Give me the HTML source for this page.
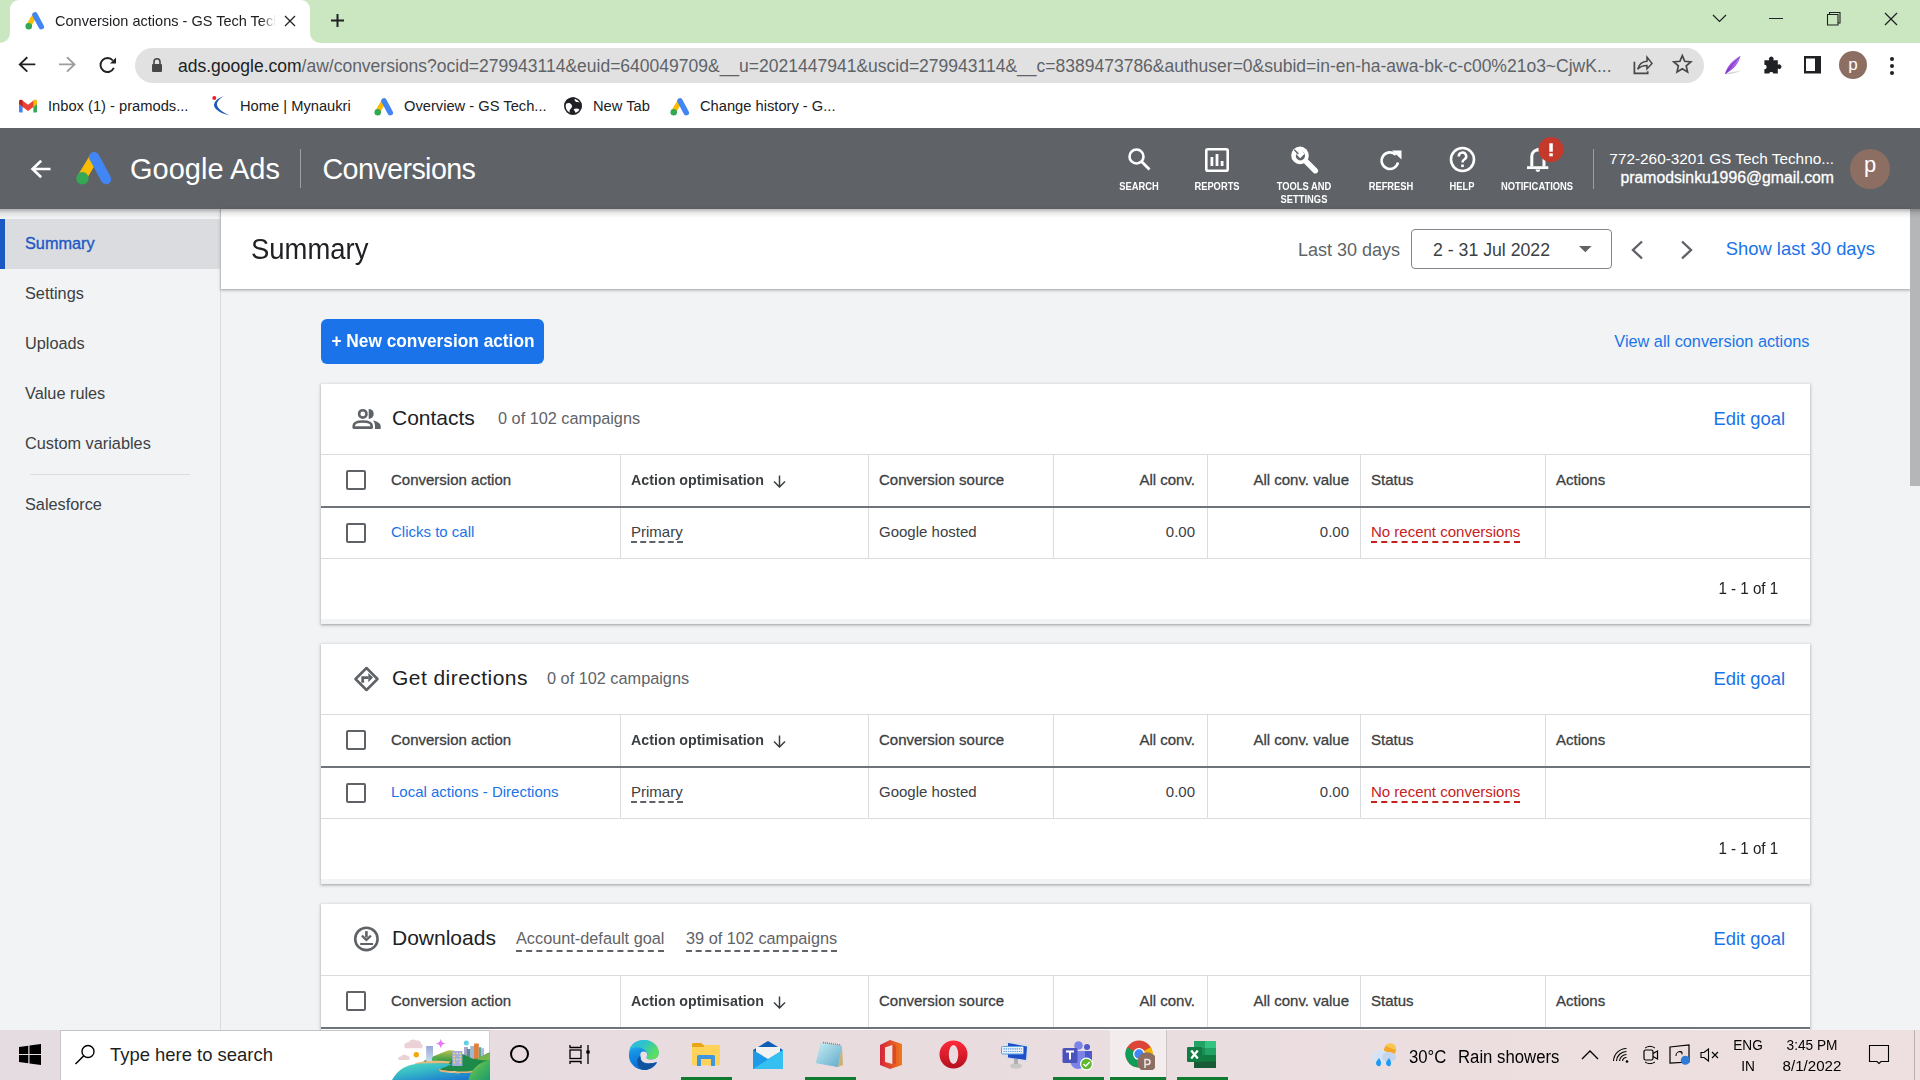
<!DOCTYPE html><html><head><meta charset="utf-8"><style>
html,body{margin:0;padding:0;width:1920px;height:1080px;overflow:hidden;background:#f1f3f4;font-family:"Liberation Sans",sans-serif;}
.r{position:absolute;}
.t{position:absolute;line-height:1;white-space:nowrap;}
</style></head><body>
<div class="r" style="left:0px;top:0px;width:1920px;height:88px;background:#fff;"></div>
<div class="r" style="left:10px;top:0px;width:300px;height:10px;background:#cbe7c1;"></div>
<div class="r" style="left:0px;top:0px;width:10px;height:43px;background:#cbe7c1;border-bottom-right-radius:10px;"></div>
<div class="r" style="left:310px;top:0px;width:1610px;height:43px;background:#cbe7c1;border-bottom-left-radius:10px;"></div>
<div class="r" style="left:10px;top:0;width:300px;height:43px;background:#fff;border-radius:9px 9px 0 0;"></div>
<svg class="r" style="left:20px;top:8px" width="28" height="28" viewBox="0 0 28 28"><g transform="scale(1.0)"><path d="M9 17L15 7" stroke="#fbbc04" stroke-width="5" stroke-linecap="round"/>
<path d="M15 7L21.3 18.7" stroke="#4285f4" stroke-width="5.5" stroke-linecap="round"/>
<circle cx="8.75" cy="18.25" r="3.3" fill="#34a853"/></g></svg>
<div class="r" style="left:55px;top:0;width:221px;height:40px;overflow:hidden;-webkit-mask-image:linear-gradient(90deg,#000 206px,transparent 221px);"><div class="t" style="left:0;top:13.10px;font-size:15px;color:#202124;transform:scaleX(0.968);transform-origin:left;">Conversion actions - GS Tech Technologies</div></div>
<svg class="r" style="left:284px;top:15px" width="12" height="12" viewBox="0 0 12 12"><path d="M1 1L11 11M11 1L1 11" stroke="#202124" stroke-width="1.3"/></svg>
<svg class="r" style="left:330px;top:13px" width="15" height="15" viewBox="0 0 15 15"><path d="M7.5 1V14M1 7.5H14" stroke="#202124" stroke-width="2"/></svg>
<svg class="r" style="left:1712px;top:14px" width="15" height="9" viewBox="0 0 15 9"><path d="M1 1L7.5 7.5L14 1" stroke="#202124" stroke-width="1.2" fill="none"/></svg>
<div class="r" style="left:1769px;top:18px;width:14px;height:1.2px;background:#202124;"></div>
<svg class="r" style="left:1826px;top:11px" width="16" height="16" viewBox="0 0 16 16"><path d="M1.5 3.5H12V14H1.5Z M3.5 3.5V1.5H14V12H12" stroke="#202124" stroke-width="1.1" fill="none"/></svg>
<svg class="r" style="left:1884px;top:12px" width="14" height="14" viewBox="0 0 14 14"><path d="M1 1L13 13M13 1L1 13" stroke="#202124" stroke-width="1.3"/></svg>
<svg class="r" style="left:18px;top:56px" width="20" height="18" viewBox="0 0 20 18"><path d="M17.3 8.4H1.8M9.3 1.2L1.8 8.4L9.3 15.6" stroke="#202124" stroke-width="1.9" fill="none"/></svg>
<svg class="r" style="left:58px;top:56px" width="20" height="18" viewBox="0 0 20 18"><path d="M1 8.4H16.5M9 1.2L16.5 8.4L9 15.6" stroke="#9e9e9e" stroke-width="1.9" fill="none"/></svg>
<svg class="r" style="left:98px;top:56px" width="20" height="18" viewBox="0 0 20 18"><path d="M14.86 4.5A7 7 0 1 0 15.84 11.96" stroke="#202124" stroke-width="1.9" fill="none"/><path d="M18 1.5V7.5H12Z" fill="#202124"/></svg>
<div class="r" style="left:135px;top:48px;width:1569px;height:35px;background:#e1e1e1;border-radius:18px;"></div>
<svg class="r" style="left:151px;top:57px" width="12" height="16" viewBox="0 0 12 16"><path d="M3 7V4.8A3 3 0 0 1 9 4.8V7" stroke="#474747" stroke-width="1.6" fill="none"/><rect x="1" y="7" width="10" height="8" rx="1" fill="#474747"/></svg>
<div class="t" style="top:57.99px;font-size:17.5px;color:#5f6368;font-weight:400;left:178px;"><span style="color:#202124">ads.google.com</span>/aw/conversions?ocid=279943114&amp;euid=640049709&amp;__u=2021447941&amp;uscid=279943114&amp;__c=8389473786&amp;authuser=0&amp;subid=in-en-ha-awa-bk-c-c00%21o3~CjwK...</div>
<svg class="r" style="left:1625px;top:48px" width="80" height="36" viewBox="0 0 80 36"><path d="M9.4 13.75V25.4H22.7V23.3" stroke="#474747" stroke-width="1.7" fill="none"/><path d="M12.6 21.2C14 16.5 17.5 13.5 22 13.3V9.2L27 15.4L22 20.9V17.6C18 17.6 15 18.8 12.6 21.2Z" stroke="#474747" stroke-width="1.5" fill="none" stroke-linejoin="miter"/><path d="M57.30 7.60 L59.71 13.28 L65.86 13.82 L61.20 17.87 L62.59 23.88 L57.30 20.70 L52.01 23.88 L53.40 17.87 L48.74 13.82 L54.89 13.28Z" stroke="#474747" stroke-width="1.7" fill="none" stroke-linejoin="miter"/></svg>
<svg class="r" style="left:1715px;top:48px" width="120" height="36" viewBox="0 0 120 36"><defs><linearGradient id="fth" x1="0" y1="1" x2="1" y2="0"><stop offset="0" stop-color="#8a3fd6"/><stop offset="0.5" stop-color="#a45be8"/><stop offset="1" stop-color="#b67cf0"/></linearGradient></defs><path d="M11 25.5C19 23.5 24 23 27 22.5C21 25 15 26.5 11 26.3Z" fill="#c8c8d0" opacity="0.8"/><path d="M10 26.3C11.5 19 17 12.5 25.3 8.1C24.5 15 18.5 21.5 10 26.3Z" fill="url(#fth)"/><path d="M10.5 25.8C15 19 19.5 14 25 8.5" stroke="#6a2aa8" stroke-width="0.8" fill="none"/><path d="M49.4 12.2H54.4A2.3 2.3 0 1 1 58.2 12.2H62.8V16.8A2.3 2.3 0 1 1 62.8 20.6V25.6H58.4A2.3 2.3 0 0 0 54.1 25.6H49.4V21.3A2.3 2.3 0 0 0 49.4 16.7Z" fill="#202124"/><path d="M89 8.1H106V25.6H89Z M91 10.6V23.1H100V10.6Z" fill="#202124" fill-rule="evenodd"/></svg>
<div class="r" style="left:1839px;top:51px;width:28px;height:28px;border-radius:50%;background:#8d6e63;"></div>
<div class="t" style="top:55.61px;font-size:17px;color:#fff;font-weight:400;left:1353px;width:1000px;text-align:center;">p</div>
<div class="r" style="left:1890px;top:57px;width:4px;height:4px;background:#202124;border-radius:50%;"></div>
<div class="r" style="left:1890px;top:64px;width:4px;height:4px;background:#202124;border-radius:50%;"></div>
<div class="r" style="left:1890px;top:71px;width:4px;height:4px;background:#202124;border-radius:50%;"></div>
<div class="r" style="left:0px;top:88px;width:1920px;height:40px;background:#fff;"></div>
<svg class="r" style="left:19px;top:99px" width="18" height="14" viewBox="0 0 18 14"><path d="M0 2.5A1.8 1.8 0 0 1 2.8 1L9 5.8L15.2 1A1.8 1.8 0 0 1 18 2.5V5.3L9 12L0 5.3Z" fill="#ea4335"/><path d="M0 2.5A1.8 1.8 0 0 1 2.8 1L3.6 1.6V7.9L0 5.3Z" fill="#c5221f"/><path d="M14.4 1.6L15.2 1A1.8 1.8 0 0 1 18 2.5V5.3L14.4 7.9Z" fill="#fbbc04"/><path d="M0 5.3L3.6 7.9V13.5H1A1 1 0 0 1 0 12.5Z" fill="#4285f4"/><path d="M18 5.3L14.4 7.9V13.5H17A1 1 0 0 0 18 12.5Z" fill="#34a853"/></svg>
<div class="t" style="top:98.76px;font-size:14.7px;color:#202124;font-weight:400;left:48px;">Inbox (1) - pramods...</div>
<svg class="r" style="left:210px;top:94px" width="22" height="24" viewBox="0 0 22 24"><path d="M14.5 2C7 4 2.5 9 4.5 13C6.5 17 13 20 19.5 21.5C13 18.5 7.5 14.5 7 11C6.5 7.5 10 4 14.5 2Z" fill="#1e5bb8"/><circle cx="4.3" cy="3.9" r="2" fill="#e8202a"/></svg>
<div class="t" style="top:98.76px;font-size:14.7px;color:#202124;font-weight:400;left:240px;">Home | Mynaukri</div>
<svg class="r" style="left:368.5px;top:94px" width="28" height="28" viewBox="0 0 28 28"><g transform="scale(1.0)"><path d="M9 17L15 7" stroke="#fbbc04" stroke-width="5" stroke-linecap="round"/>
<path d="M15 7L21.3 18.7" stroke="#4285f4" stroke-width="5.5" stroke-linecap="round"/>
<circle cx="8.75" cy="18.25" r="3.3" fill="#34a853"/></g></svg>
<div class="t" style="top:98.76px;font-size:14.7px;color:#202124;font-weight:400;left:404px;">Overview - GS Tech...</div>
<svg class="r" style="left:564px;top:97px" width="18" height="18" viewBox="0 0 18 18"><circle cx="9" cy="9" r="8.75" fill="#202124"/><path d="M2.5 6.5C4.5 5.5 6.5 6 7.5 7.5C8.5 9 8 11 6.5 12C5 13 5.5 15.5 6.5 17.3C3 16.2 0.6 12.8 0.6 9C0.6 8.1 0.8 7.3 1 6.6Z" fill="#fff"/><path d="M11 0.8C10 2.5 10.5 4.5 12.5 5C14.5 5.5 16.5 5 17.2 7.2C16.6 3.9 14.2 1.4 11 0.8Z" fill="#fff"/><path d="M9.5 12.5C11 11 14 11 15.5 12.5C16 13 16.5 13.5 16.4 13.8C15.3 15.5 13.6 16.8 11.6 17.3C12 16 11 14 9.5 12.5Z" fill="#fff"/><circle cx="9" cy="9" r="8.1" stroke="#202124" stroke-width="1.5" fill="none"/></svg>
<div class="t" style="top:98.76px;font-size:14.7px;color:#202124;font-weight:400;left:593px;">New Tab</div>
<svg class="r" style="left:664.5px;top:94px" width="28" height="28" viewBox="0 0 28 28"><g transform="scale(1.0)"><path d="M9 17L15 7" stroke="#fbbc04" stroke-width="5" stroke-linecap="round"/>
<path d="M15 7L21.3 18.7" stroke="#4285f4" stroke-width="5.5" stroke-linecap="round"/>
<circle cx="8.75" cy="18.25" r="3.3" fill="#34a853"/></g></svg>
<div class="t" style="top:98.76px;font-size:14.7px;color:#202124;font-weight:400;left:700px;">Change history - G...</div>
<div class="r" style="left:0px;top:128px;width:1920px;height:81px;background:#5f6368;"></div>
<svg class="r" style="left:30px;top:159px" width="21" height="20" viewBox="0 0 21 20"><path d="M20.5 10H3M11.2 1.7L2.5 10L11.2 18.3" stroke="#fff" stroke-width="2.6" fill="none"/></svg>
<svg class="r" style="left:66px;top:144px" width="50" height="50" viewBox="0 0 50 50"><g transform="scale(1.88)"><path d="M9 17L15 7" stroke="#fbbc04" stroke-width="5" stroke-linecap="round"/>
<path d="M15 7L21.3 18.7" stroke="#4285f4" stroke-width="5.5" stroke-linecap="round"/>
<circle cx="8.75" cy="18.25" r="3.3" fill="#34a853"/></g></svg>
<div class="t" style="top:154.95px;font-size:29px;color:#fff;font-weight:400;left:130px;">Google Ads</div>
<div class="r" style="left:300px;top:149px;width:1px;height:39px;background:#9aa0a6;"></div>
<div class="t" style="top:155.21px;font-size:28.7px;color:#fff;font-weight:400;left:322.5px;letter-spacing:-0.6px;">Conversions</div>
<div class="t" style="top:180.99px;font-size:11px;color:#fff;font-weight:700;left:639px;width:1000px;text-align:center;transform:scaleX(0.85);transform-origin:center;">SEARCH</div>
<div class="t" style="top:180.99px;font-size:11px;color:#fff;font-weight:700;left:717px;width:1000px;text-align:center;transform:scaleX(0.85);transform-origin:center;">REPORTS</div>
<div class="t" style="top:180.99px;font-size:11px;color:#fff;font-weight:700;left:804px;width:1000px;text-align:center;transform:scaleX(0.85);transform-origin:center;">TOOLS AND</div>
<div class="t" style="top:193.99px;font-size:11px;color:#fff;font-weight:700;left:804px;width:1000px;text-align:center;transform:scaleX(0.85);transform-origin:center;">SETTINGS</div>
<div class="t" style="top:180.99px;font-size:11px;color:#fff;font-weight:700;left:891px;width:1000px;text-align:center;transform:scaleX(0.85);transform-origin:center;">REFRESH</div>
<div class="t" style="top:180.99px;font-size:11px;color:#fff;font-weight:700;left:962px;width:1000px;text-align:center;transform:scaleX(0.85);transform-origin:center;">HELP</div>
<div class="t" style="top:180.99px;font-size:11px;color:#fff;font-weight:700;left:1037px;width:1000px;text-align:center;transform:scaleX(0.85);transform-origin:center;">NOTIFICATIONS</div>
<svg class="r" style="left:1127px;top:147px" width="25" height="25" viewBox="0 0 25 25"><circle cx="9.5" cy="9.5" r="7" stroke="#fff" stroke-width="2.6" fill="none"/><path d="M14.5 14.5L22.5 22.5" stroke="#fff" stroke-width="2.8"/></svg>
<svg class="r" style="left:1205px;top:148px" width="25" height="24" viewBox="0 0 25 24"><rect x="1.3" y="1.3" width="21.4" height="21.4" rx="1.5" stroke="#fff" stroke-width="2.6" fill="none"/><rect x="5.5" y="9" width="2.8" height="9" fill="#fff"/><rect x="10.6" y="6" width="2.8" height="12" fill="#fff"/><rect x="15.7" y="13" width="2.8" height="5" fill="#fff"/></svg>
<svg class="r" style="left:1285px;top:140px" width="36" height="36" viewBox="0 0 36 36"><path d="M15 15.4L30.3 30.7" stroke="#fff" stroke-width="5.5" stroke-linecap="round"/><circle cx="15" cy="15.4" r="8.8" fill="#fff"/><circle cx="15.4" cy="15.8" r="4.6" fill="#5f6368"/><path d="M15.4 9.6L19.6 13.8L15.2 18.2L11 14Z" fill="#fff"/><path d="M9.3 9.8L13.4 13.9" stroke="#5f6368" stroke-width="1.4"/><path d="M11.6 15.2A4 4 0 0 0 19.2 15" stroke="#fff" stroke-width="1.2" fill="none" opacity="0"/></svg>
<svg class="r" style="left:1379px;top:149px" width="25" height="23" viewBox="0 0 25 23"><path d="M19 13.5A8.3 8.3 0 1 1 16.8 5.8" stroke="#fff" stroke-width="2.6" fill="none"/><path d="M13 1.5H22.5V10.5Z" fill="#fff"/></svg>
<svg class="r" style="left:1449px;top:146px" width="28" height="28" viewBox="0 0 28 28"><circle cx="13.5" cy="13.5" r="11.5" stroke="#fff" stroke-width="2.6" fill="none"/><path d="M9.8 10.5A3.7 3.7 0 1 1 15.5 13.3C14 14.2 13.5 15 13.5 16.5" stroke="#fff" stroke-width="2.5" fill="none"/><rect x="12.2" y="18.5" width="2.6" height="2.6" fill="#fff"/></svg>
<svg class="r" style="left:1515px;top:135px" width="50" height="40" viewBox="0 0 50 40"><rect x="12" y="31.25" width="21.3" height="2.8" fill="#fff"/><path d="M16.8 31.5V21A6.1 6.1 0 0 1 29 21V31.5" stroke="#fff" stroke-width="3" fill="none"/><circle cx="22.9" cy="14.3" r="1.6" fill="#fff"/><path d="M20.5 34.5A2.4 2.4 0 0 0 25.3 34.5Z" fill="#fff"/><circle cx="36" cy="14.6" r="12.5" fill="#c5392b"/><rect x="34.3" y="8.3" width="3.5" height="8.4" fill="#fff"/><rect x="34.3" y="18.3" width="3.5" height="3" fill="#fff"/></svg>
<div class="r" style="left:1593px;top:149px;width:1px;height:40px;background:#9aa0a6;"></div>
<div class="t" style="top:151.01px;font-size:15.35px;color:#fff;font-weight:400;right:86px;text-align:right;">772-260-3201 GS Tech Techno...</div>
<div class="t" style="top:170.33px;font-size:15.8px;color:#fff;font-weight:400;right:86px;text-align:right;-webkit-text-stroke:0.3px #fff;">pramodsinku1996@gmail.com</div>
<div class="r" style="left:1850px;top:149px;width:40px;height:40px;border-radius:50%;background:#8d6e63;"></div>
<div class="t" style="top:154.38px;font-size:22px;color:#fff;font-weight:400;left:1370px;width:1000px;text-align:center;">p</div>
<div class="r" style="left:0px;top:209px;width:220px;height:821px;background:#f1f3f4;border-right:1px solid #dadce0;"></div>
<div class="r" style="left:0px;top:219px;width:220px;height:50px;background:#dadce0;"></div>
<div class="r" style="left:0px;top:219px;width:5px;height:50px;background:#1a58c2;"></div>
<div class="t" style="top:235.40px;font-size:16.3px;color:#1c58c4;font-weight:400;left:25px;-webkit-text-stroke:0.35px #1c58c4;">Summary</div>
<div class="t" style="top:285.00px;font-size:16.3px;color:#3c4043;font-weight:400;left:25px;">Settings</div>
<div class="t" style="top:335.00px;font-size:16.3px;color:#3c4043;font-weight:400;left:25px;">Uploads</div>
<div class="t" style="top:385.00px;font-size:16.3px;color:#3c4043;font-weight:400;left:25px;">Value rules</div>
<div class="t" style="top:435.00px;font-size:16.3px;color:#3c4043;font-weight:400;left:25px;">Custom variables</div>
<div class="r" style="left:30px;top:474px;width:160px;height:1px;background:#dadce0;"></div>
<div class="t" style="top:495.70px;font-size:16.3px;color:#3c4043;font-weight:400;left:25px;">Salesforce</div>
<div class="r" style="left:221px;top:209px;width:1689px;height:80px;background:#fff;box-shadow:0 1px 2px rgba(60,64,67,.3),0 1px 3px 1px rgba(60,64,67,.15);"></div>
<div class="t" style="top:233.83px;font-size:29.5px;color:#202124;font-weight:400;left:250.8px;transform:scaleX(0.93);transform-origin:left;">Summary</div>
<div class="t" style="top:241.46px;font-size:18px;color:#5f6368;font-weight:400;right:520px;text-align:right;">Last 30 days</div>
<div class="r" style="left:1411px;top:229px;width:199px;height:38px;border:1px solid #80868b;border-radius:4px;background:#fff;"></div>
<div class="t" style="top:241.72px;font-size:17.7px;color:#3c4043;font-weight:400;left:1433px;">2 - 31 Jul 2022</div>
<svg class="r" style="left:1579px;top:246px" width="13" height="7" viewBox="0 0 13 7"><path d="M0 0H12.6L6.3 6.3Z" fill="#5f6368"/></svg>
<svg class="r" style="left:1630px;top:240px" width="14" height="20" viewBox="0 0 14 20"><path d="M12 1.5L3 10L12 18.5" stroke="#5f6368" stroke-width="2.4" fill="none"/></svg>
<svg class="r" style="left:1680px;top:240px" width="14" height="20" viewBox="0 0 14 20"><path d="M2 1.5L11 10L2 18.5" stroke="#5f6368" stroke-width="2.4" fill="none"/></svg>
<div class="t" style="top:240.12px;font-size:18.4px;color:#1a73e8;font-weight:400;right:45px;text-align:right;">Show last 30 days</div>
<div class="r" style="left:1910px;top:209px;width:10px;height:821px;background:#f1f3f4;"></div>
<div class="r" style="left:1910px;top:209px;width:10px;height:277px;background:#b5b6b8;"></div>
<div class="r" style="left:0px;top:209px;width:1920px;height:9px;background:linear-gradient(rgba(0,0,0,.28),rgba(0,0,0,.08) 45%,rgba(0,0,0,0));"></div>
<div class="r" style="left:321px;top:319px;width:223px;height:45px;background:#1a73e8;border-radius:6px;"></div>
<div class="t" style="top:332.11px;font-size:18.3px;color:#fff;font-weight:700;left:-67px;width:1000px;text-align:center;transform:scaleX(0.945);transform-origin:center;">+ New conversion action</div>
<div class="t" style="top:332.90px;font-size:16.3px;color:#1a73e8;font-weight:400;right:110.5px;text-align:right;">View all conversion actions</div>
<div class="r" style="left:321px;top:384px;width:1489px;height:240px;background:#fff;box-shadow:0 1px 2px rgba(60,64,67,.3),0 1px 3px 1px rgba(60,64,67,.15);"></div>
<svg class="r" style="left:345px;top:400px" width="40" height="32" viewBox="0 0 40 32"><circle cx="17.8" cy="13.9" r="3.7" stroke="#5f6368" stroke-width="2.6" fill="none"/><path d="M23.7 8.9A5 5 0 0 1 23.7 18.9Z" fill="#5f6368"/><path d="M8.7 27.6V26C8.7 22.5 13.5 21.5 17.7 21.5C21.9 21.5 26.7 22.5 26.7 26V27.6Z" stroke="#5f6368" stroke-width="2.6" fill="none" stroke-linejoin="round"/><path d="M28.1 20.4C31.5 21.2 35.7 23 35.7 26V28.9H30V26C30 23.8 29.3 21.8 28.1 20.4Z" fill="#5f6368"/></svg>
<div class="t" style="top:406.72px;font-size:21px;color:#202124;font-weight:400;left:392px;">Contacts</div>
<div class="t" style="top:410.20px;font-size:16.3px;color:#5f6368;font-weight:400;left:498px;">0 of 102 campaigns</div>
<div class="t" style="top:410.12px;font-size:18.4px;color:#1a73e8;font-weight:400;right:135px;text-align:right;">Edit goal</div>
<div class="r" style="left:321px;top:454px;width:1489px;height:1px;background:#dadce0;"></div>
<div class="r" style="left:321px;top:506px;width:1489px;height:2px;background:#6f747a;"></div>
<div class="r" style="left:620px;top:455px;width:1px;height:51px;background:#dadce0;"></div>
<div class="r" style="left:868px;top:455px;width:1px;height:51px;background:#dadce0;"></div>
<div class="r" style="left:1053px;top:455px;width:1px;height:51px;background:#dadce0;"></div>
<div class="r" style="left:1207px;top:455px;width:1px;height:51px;background:#dadce0;"></div>
<div class="r" style="left:1360px;top:455px;width:1px;height:51px;background:#dadce0;"></div>
<div class="r" style="left:1545px;top:455px;width:1px;height:51px;background:#dadce0;"></div>
<div class="r" style="left:346px;top:470px;width:16px;height:16px;border:2px solid #5f6368;border-radius:2px;"></div>
<div class="t" style="top:472.30px;font-size:15px;color:#3c4043;font-weight:400;left:391px;-webkit-text-stroke:0.3px #3c4043;">Conversion action</div>
<div class="t" style="top:472.30px;font-size:15px;color:#3c4043;font-weight:700;left:631px;transform:scaleX(0.95);transform-origin:left;">Action optimisation</div>
<svg class="r" style="left:773px;top:475px" width="13" height="13" viewBox="0 0 13 13"><path d="M6.5 0.5V12M1 6.5L6.5 12L12 6.5" stroke="#3c4043" stroke-width="1.5" fill="none"/></svg>
<div class="t" style="top:472.30px;font-size:15px;color:#3c4043;font-weight:400;left:879px;-webkit-text-stroke:0.3px #3c4043;">Conversion source</div>
<div class="t" style="top:472.30px;font-size:15px;color:#3c4043;font-weight:400;right:725px;text-align:right;-webkit-text-stroke:0.3px #3c4043;">All conv.</div>
<div class="t" style="top:472.30px;font-size:15px;color:#3c4043;font-weight:400;right:571px;text-align:right;-webkit-text-stroke:0.3px #3c4043;">All conv. value</div>
<div class="t" style="top:472.30px;font-size:15px;color:#3c4043;font-weight:400;left:1371px;-webkit-text-stroke:0.3px #3c4043;">Status</div>
<div class="t" style="top:472.30px;font-size:15px;color:#3c4043;font-weight:400;left:1556px;-webkit-text-stroke:0.3px #3c4043;">Actions</div>
<div class="r" style="left:620px;top:508px;width:1px;height:50px;background:#dadce0;"></div>
<div class="r" style="left:868px;top:508px;width:1px;height:50px;background:#dadce0;"></div>
<div class="r" style="left:1053px;top:508px;width:1px;height:50px;background:#dadce0;"></div>
<div class="r" style="left:1207px;top:508px;width:1px;height:50px;background:#dadce0;"></div>
<div class="r" style="left:1360px;top:508px;width:1px;height:50px;background:#dadce0;"></div>
<div class="r" style="left:1545px;top:508px;width:1px;height:50px;background:#dadce0;"></div>
<div class="r" style="left:321px;top:558px;width:1489px;height:1px;background:#dadce0;"></div>
<div class="r" style="left:346px;top:523px;width:16px;height:16px;border:2px solid #5f6368;border-radius:2px;"></div>
<div class="t" style="top:524.30px;font-size:15px;color:#1a73e8;font-weight:400;left:391px;">Clicks to call</div>
<div class="t" style="top:524.30px;font-size:15px;color:#3c4043;font-weight:400;left:631px;border-bottom:2px dashed #5f6368;height:16.5px;">Primary</div>
<div class="t" style="top:524.30px;font-size:15px;color:#3c4043;font-weight:400;left:879px;">Google hosted</div>
<div class="t" style="top:524.30px;font-size:15px;color:#3c4043;font-weight:400;right:725px;text-align:right;">0.00</div>
<div class="t" style="top:524.30px;font-size:15px;color:#3c4043;font-weight:400;right:571px;text-align:right;">0.00</div>
<div class="t" style="top:524.30px;font-size:15px;color:#c5221f;font-weight:400;left:1371px;border-bottom:2px dashed #c5221f;height:16.5px;">No recent conversions</div>
<div class="t" style="top:581.06px;font-size:16px;color:#202124;font-weight:400;right:142px;text-align:right;transform:scaleX(0.945);transform-origin:right;">1 - 1 of 1</div>
<div class="r" style="left:321px;top:619px;width:1489px;height:5px;background:#f1f3f4;"></div>
<div class="r" style="left:321px;top:644px;width:1489px;height:240px;background:#fff;box-shadow:0 1px 2px rgba(60,64,67,.3),0 1px 3px 1px rgba(60,64,67,.15);"></div>
<svg class="r" style="left:345px;top:660px" width="40" height="32" viewBox="0 0 40 32"><path d="M21.5 8L32.5 19L21.5 30L10.5 19Z" stroke="#5f6368" stroke-width="2.5" fill="none" stroke-linejoin="round"/><path d="M16.3 16.3H23.5V19.1H19.1V22.8H16.3Z" fill="#5f6368"/><path d="M23.3 13L28 17.6L23.3 22.2Z" fill="#5f6368"/></svg>
<div class="t" style="top:666.72px;font-size:21px;color:#202124;font-weight:400;left:392px;letter-spacing:0.45px;">Get directions</div>
<div class="t" style="top:670.20px;font-size:16.3px;color:#5f6368;font-weight:400;left:547px;">0 of 102 campaigns</div>
<div class="t" style="top:670.12px;font-size:18.4px;color:#1a73e8;font-weight:400;right:135px;text-align:right;">Edit goal</div>
<div class="r" style="left:321px;top:714px;width:1489px;height:1px;background:#dadce0;"></div>
<div class="r" style="left:321px;top:766px;width:1489px;height:2px;background:#6f747a;"></div>
<div class="r" style="left:620px;top:715px;width:1px;height:51px;background:#dadce0;"></div>
<div class="r" style="left:868px;top:715px;width:1px;height:51px;background:#dadce0;"></div>
<div class="r" style="left:1053px;top:715px;width:1px;height:51px;background:#dadce0;"></div>
<div class="r" style="left:1207px;top:715px;width:1px;height:51px;background:#dadce0;"></div>
<div class="r" style="left:1360px;top:715px;width:1px;height:51px;background:#dadce0;"></div>
<div class="r" style="left:1545px;top:715px;width:1px;height:51px;background:#dadce0;"></div>
<div class="r" style="left:346px;top:730px;width:16px;height:16px;border:2px solid #5f6368;border-radius:2px;"></div>
<div class="t" style="top:732.30px;font-size:15px;color:#3c4043;font-weight:400;left:391px;-webkit-text-stroke:0.3px #3c4043;">Conversion action</div>
<div class="t" style="top:732.30px;font-size:15px;color:#3c4043;font-weight:700;left:631px;transform:scaleX(0.95);transform-origin:left;">Action optimisation</div>
<svg class="r" style="left:773px;top:735px" width="13" height="13" viewBox="0 0 13 13"><path d="M6.5 0.5V12M1 6.5L6.5 12L12 6.5" stroke="#3c4043" stroke-width="1.5" fill="none"/></svg>
<div class="t" style="top:732.30px;font-size:15px;color:#3c4043;font-weight:400;left:879px;-webkit-text-stroke:0.3px #3c4043;">Conversion source</div>
<div class="t" style="top:732.30px;font-size:15px;color:#3c4043;font-weight:400;right:725px;text-align:right;-webkit-text-stroke:0.3px #3c4043;">All conv.</div>
<div class="t" style="top:732.30px;font-size:15px;color:#3c4043;font-weight:400;right:571px;text-align:right;-webkit-text-stroke:0.3px #3c4043;">All conv. value</div>
<div class="t" style="top:732.30px;font-size:15px;color:#3c4043;font-weight:400;left:1371px;-webkit-text-stroke:0.3px #3c4043;">Status</div>
<div class="t" style="top:732.30px;font-size:15px;color:#3c4043;font-weight:400;left:1556px;-webkit-text-stroke:0.3px #3c4043;">Actions</div>
<div class="r" style="left:620px;top:768px;width:1px;height:50px;background:#dadce0;"></div>
<div class="r" style="left:868px;top:768px;width:1px;height:50px;background:#dadce0;"></div>
<div class="r" style="left:1053px;top:768px;width:1px;height:50px;background:#dadce0;"></div>
<div class="r" style="left:1207px;top:768px;width:1px;height:50px;background:#dadce0;"></div>
<div class="r" style="left:1360px;top:768px;width:1px;height:50px;background:#dadce0;"></div>
<div class="r" style="left:1545px;top:768px;width:1px;height:50px;background:#dadce0;"></div>
<div class="r" style="left:321px;top:818px;width:1489px;height:1px;background:#dadce0;"></div>
<div class="r" style="left:346px;top:783px;width:16px;height:16px;border:2px solid #5f6368;border-radius:2px;"></div>
<div class="t" style="top:784.30px;font-size:15px;color:#1a73e8;font-weight:400;left:391px;">Local actions - Directions</div>
<div class="t" style="top:784.30px;font-size:15px;color:#3c4043;font-weight:400;left:631px;border-bottom:2px dashed #5f6368;height:16.5px;">Primary</div>
<div class="t" style="top:784.30px;font-size:15px;color:#3c4043;font-weight:400;left:879px;">Google hosted</div>
<div class="t" style="top:784.30px;font-size:15px;color:#3c4043;font-weight:400;right:725px;text-align:right;">0.00</div>
<div class="t" style="top:784.30px;font-size:15px;color:#3c4043;font-weight:400;right:571px;text-align:right;">0.00</div>
<div class="t" style="top:784.30px;font-size:15px;color:#c5221f;font-weight:400;left:1371px;border-bottom:2px dashed #c5221f;height:16.5px;">No recent conversions</div>
<div class="t" style="top:841.06px;font-size:16px;color:#202124;font-weight:400;right:142px;text-align:right;transform:scaleX(0.945);transform-origin:right;">1 - 1 of 1</div>
<div class="r" style="left:321px;top:879px;width:1489px;height:5px;background:#f1f3f4;"></div>
<div class="r" style="left:321px;top:904px;width:1489px;height:196px;background:#fff;box-shadow:0 1px 2px rgba(60,64,67,.3),0 1px 3px 1px rgba(60,64,67,.15);"></div>
<svg class="r" style="left:345px;top:920px" width="40" height="32" viewBox="0 0 40 32"><circle cx="21.4" cy="18.9" r="11.2" stroke="#5f6368" stroke-width="2.6" fill="none"/><path d="M21.4 11.1V17.5" stroke="#5f6368" stroke-width="2.6"/><path d="M16.1 16.4L17.7 14.8L21.4 18.5L25.1 14.8L26.7 16.4L21.4 21.6Z" fill="#5f6368"/><path d="M15.2 24H28" stroke="#5f6368" stroke-width="2"/></svg>
<div class="t" style="top:926.72px;font-size:21px;color:#202124;font-weight:400;left:392px;">Downloads</div>
<div class="t" style="top:930.20px;font-size:16.3px;color:#5f6368;font-weight:400;left:516px;border-bottom:2px dashed #5f6368;height:20px;">Account-default goal</div>
<div class="t" style="top:930.20px;font-size:16.3px;color:#5f6368;font-weight:400;left:686px;border-bottom:2px dashed #5f6368;height:20px;">39 of 102 campaigns</div>
<div class="t" style="top:930.12px;font-size:18.4px;color:#1a73e8;font-weight:400;right:135px;text-align:right;">Edit goal</div>
<div class="r" style="left:321px;top:975px;width:1489px;height:1px;background:#dadce0;"></div>
<div class="r" style="left:321px;top:1027px;width:1489px;height:2px;background:#6f747a;"></div>
<div class="r" style="left:620px;top:976px;width:1px;height:51px;background:#dadce0;"></div>
<div class="r" style="left:868px;top:976px;width:1px;height:51px;background:#dadce0;"></div>
<div class="r" style="left:1053px;top:976px;width:1px;height:51px;background:#dadce0;"></div>
<div class="r" style="left:1207px;top:976px;width:1px;height:51px;background:#dadce0;"></div>
<div class="r" style="left:1360px;top:976px;width:1px;height:51px;background:#dadce0;"></div>
<div class="r" style="left:1545px;top:976px;width:1px;height:51px;background:#dadce0;"></div>
<div class="r" style="left:346px;top:991px;width:16px;height:16px;border:2px solid #5f6368;border-radius:2px;"></div>
<div class="t" style="top:993.30px;font-size:15px;color:#3c4043;font-weight:400;left:391px;-webkit-text-stroke:0.3px #3c4043;">Conversion action</div>
<div class="t" style="top:993.30px;font-size:15px;color:#3c4043;font-weight:700;left:631px;transform:scaleX(0.95);transform-origin:left;">Action optimisation</div>
<svg class="r" style="left:773px;top:996px" width="13" height="13" viewBox="0 0 13 13"><path d="M6.5 0.5V12M1 6.5L6.5 12L12 6.5" stroke="#3c4043" stroke-width="1.5" fill="none"/></svg>
<div class="t" style="top:993.30px;font-size:15px;color:#3c4043;font-weight:400;left:879px;-webkit-text-stroke:0.3px #3c4043;">Conversion source</div>
<div class="t" style="top:993.30px;font-size:15px;color:#3c4043;font-weight:400;right:725px;text-align:right;-webkit-text-stroke:0.3px #3c4043;">All conv.</div>
<div class="t" style="top:993.30px;font-size:15px;color:#3c4043;font-weight:400;right:571px;text-align:right;-webkit-text-stroke:0.3px #3c4043;">All conv. value</div>
<div class="t" style="top:993.30px;font-size:15px;color:#3c4043;font-weight:400;left:1371px;-webkit-text-stroke:0.3px #3c4043;">Status</div>
<div class="t" style="top:993.30px;font-size:15px;color:#3c4043;font-weight:400;left:1556px;-webkit-text-stroke:0.3px #3c4043;">Actions</div>
<div class="r" style="left:0px;top:1030px;width:1920px;height:50px;background:linear-gradient(90deg,#e5dce2 0%,#e9dcdf 45%,#eee0e0 100%);"></div>
<svg class="r" style="left:19px;top:1044px" width="22" height="21" viewBox="0 0 22 21"><path d="M0 3L9.3 1.7V10H0Z M10.5 1.5L22 0V10H10.5Z M0 11H9.3V19.3L0 18Z M10.5 11H22V21L10.5 19.5Z" fill="#000"/></svg>
<div class="r" style="left:60px;top:1030px;width:430px;height:50px;background:#fff;border-left:1px solid #c4c4c4;border-top:1px solid #c4c4c4;border-right:1px solid #d0d0d0;box-sizing:border-box;"></div>
<svg class="r" style="left:74px;top:1044px" width="22" height="22" viewBox="0 0 22 22"><circle cx="14" cy="7.5" r="6" stroke="#000" stroke-width="1.4" fill="none"/><path d="M9.8 11.7L1.5 20" stroke="#000" stroke-width="1.5"/></svg>
<div class="t" style="top:1046.38px;font-size:18.45px;color:#1f1f1f;font-weight:400;left:110px;">Type here to search</div>
<svg class="r" style="left:390px;top:1031px" width="100" height="49" viewBox="0 0 100 49"><defs>
<linearGradient id="wat" x1="0" y1="0" x2="0.8" y2="1"><stop offset="0" stop-color="#52e0bf"/><stop offset="0.5" stop-color="#34b4c8"/><stop offset="1" stop-color="#1a78d0"/></linearGradient>
<linearGradient id="hil" x1="0" y1="0" x2="0" y2="1"><stop offset="0" stop-color="#b4c24a"/><stop offset="0.5" stop-color="#3a9a48"/><stop offset="1" stop-color="#1b7f45"/></linearGradient>
<linearGradient id="hil2" x1="0" y1="0" x2="1" y2="1"><stop offset="0" stop-color="#b8cf4a"/><stop offset="0.5" stop-color="#45b45a"/><stop offset="1" stop-color="#1c9a6a"/></linearGradient>
<linearGradient id="bld" x1="0" y1="0" x2="0" y2="1"><stop offset="0" stop-color="#9aa6d8"/><stop offset="1" stop-color="#c4dcf0"/></linearGradient>
</defs>
<path d="M14.5 16.5C13.5 13 16 11 18.5 11.5C19.5 8.5 24 7.5 26.5 9.5C29 9 31.5 11 31 13C33.5 13.5 33.5 16.8 31 17.2H16Z" fill="#ebd2d6"/>
<path d="M8.5 29C7.5 27 9 25.5 11 25.5C12 23.2 16 23 17.5 25C19.5 25 20.5 27.5 19 29Z" fill="#ebd2d6"/>
<circle cx="26.3" cy="23.7" r="2.7" fill="#f5a70a"/>
<path d="M50.8 7.8C51.5 11 52.5 12 56 12.5C52.5 13.2 51.5 14.2 50.8 17.5C50 14.2 49 13.2 45.5 12.5C49 12 50 11 50.8 7.8Z" fill="#e57df2"/>
<circle cx="76.3" cy="12" r="2.5" fill="#62cfe6"/>
<rect x="74" y="16" width="4" height="16" fill="#a8a6cc"/><rect x="76.8" y="18" width="3.8" height="14" fill="#5e8aa0"/>
<rect x="80.2" y="15" width="4.8" height="17" fill="#9fb8cc"/><rect x="84.1" y="12.5" width="4.7" height="19" fill="#e57d3a"/>
<rect x="88.8" y="16.2" width="2.4" height="15" fill="#5aa88c"/><rect x="91.1" y="17.2" width="3" height="14" fill="#b3b6e0"/>
<path d="M33.6 30C42 26 50 22 58 19.5C64 18.5 70 21 74 24V40H34Z" fill="url(#hil)"/>
<rect x="36.2" y="15" width="6.8" height="15" fill="url(#bld)"/>
<circle cx="44.5" cy="28" r="2.6" fill="#4aae4a"/>
<path d="M25 32.3C33 29.5 50 29 61.5 30.5L60 33C50 32 36 33 26 35Z" fill="#e9b97f"/>
<path d="M55.7 35.5C60 31 66 25 72 23C77 24 80 27.5 85 28C91 27 95 22.5 100 21.5V44H72C64 39 58 37.5 55.7 35.5Z" fill="#1e8a4a"/>
<path d="M2 49C8 38 18 33 30 32.5C42 32 52 32 62 33C56 36 50 38 48 39C56 42 70 43 84 41.5L80 49Z" fill="url(#wat)"/>

<path d="M48.2 37.8C52 39.5 62 40.5 72 40.5C78 40.5 82 40 84 39.5L83 41.5C72 42.5 58 42 50 40.5Z" fill="#eab27a"/>
<rect x="62.2" y="20" width="10.2" height="15" fill="#a3acdc"/>
<path d="M63.5 22.5H65M66.5 22.5H68M69.5 22.5H71M63.5 25.5H65M69.5 25.5H71M63.5 28.5H65M66.5 28.5H68M69.5 28.5H71M63.5 31.5H65M69.5 31.5H71" stroke="#f1e27a" stroke-width="1.3"/>
<path d="M78.4 49C80 40 88 31 100 28.7V49Z" fill="url(#hil2)"/>
<path d="M86 28C91 26 95 23 100 22V29C95 29.5 90 29.5 86 28Z" fill="#8cc04a" opacity="0.8"/></svg>
<div class="r" style="left:510.4px;top:1045px;width:14.2px;height:14.2px;border:2.3px solid #000;border-radius:50%;"></div>
<svg class="r" style="left:568px;top:1044px" width="24" height="21" viewBox="0 0 24 21"><path d="M2 1V3.5H13V1 M2 20V17.5H13V20" stroke="#000" stroke-width="1.3" fill="none"/><rect x="2" y="6" width="11" height="8.5" stroke="#000" stroke-width="1.3" fill="none"/><path d="M20 1V20" stroke="#000" stroke-width="1.3"/><rect x="18.3" y="6.5" width="3.4" height="3" fill="#000"/></svg>
<svg class="r" style="left:620px;top:1035px" width="50" height="40" viewBox="0 0 50 40"><defs><linearGradient id="eg0" x1="0" y1="0" x2="0.3" y2="1"><stop offset="0" stop-color="#3cc0f6"/><stop offset="0.45" stop-color="#1590e4"/><stop offset="1" stop-color="#0b6ad2"/></linearGradient>
<linearGradient id="eg1" x1="0" y1="0" x2="1" y2="0.5"><stop offset="0" stop-color="#30b8ea"/><stop offset="0.5" stop-color="#2cc4c8"/><stop offset="1" stop-color="#5ee05a"/></linearGradient></defs>
<circle cx="23.9" cy="19.9" r="15" fill="url(#eg0)"/>
<path d="M9.2 15C11 8.5 17 4.9 24 4.9C32.5 4.9 38.9 10.5 38.9 17.8C38.9 22 35.5 24.6 31 24.6C28.5 24.6 26.3 23.6 26.2 22.4C27 21.4 27.3 20.5 27.3 19.6C27.3 16.5 24 13 18 12.2C14 11.8 10.5 13.5 9.2 15Z" fill="url(#eg1)"/>
<path d="M38.9 17.8C38.9 22 35.5 24.6 31 24.6C28.5 24.6 26.3 23.6 26.2 22.4L21 21C19.6 25.5 23 28.4 28.3 28.4C32 28.4 35 27.6 37 27.2L40 26L40 17Z" fill="#ebdfe2"/><path d="M20.6 20.8C19.6 25.5 23 28.4 28.3 28.4C32 28.4 35 27.6 37 27.2C34.5 32 29.5 35 24.5 35C20.5 35 17.4 31.5 17.2 26.5C17.1 23.8 18.5 21.6 20.6 20.8Z" fill="#12539f"/>
<circle cx="23.7" cy="20" r="3.4" fill="#ebdfe2"/></svg>
<svg class="r" style="left:692px;top:1042px" width="28" height="25" viewBox="0 0 28 25"><path d="M0 2.5A1.5 1.5 0 0 1 1.5 1H9L11 3H26.5A1.5 1.5 0 0 1 28 4.5V22A1.5 1.5 0 0 1 26.5 23.5H1.5A1.5 1.5 0 0 1 0 22Z" fill="#ffd35a"/><path d="M0 2.5A1.5 1.5 0 0 1 1.5 1H9L12 3.5V5H0Z" fill="#e7a517"/><path d="M5 24V14.5A1.5 1.5 0 0 1 6.5 13H21.5A1.5 1.5 0 0 1 23 14.5V24H19V17H9V24Z" fill="#3f95e0"/></svg>
<div class="r" style="left:681px;top:1077px;width:51px;height:3px;background:#0f7b2e;"></div>
<svg class="r" style="left:753px;top:1041px" width="30" height="28" viewBox="0 0 30 28"><path d="M0 9L15 0L30 9V28H0Z" fill="#0a5fb4"/><path d="M3 6H27V20H3Z" fill="#f2f2f2"/><path d="M0 9L15 18L30 9V28H0Z" fill="#1f9ae6"/><path d="M30 9V28H0Z" fill="#36c0f2"/><path d="M0 9L15 18L30 9L15 14Z" fill="#e6e6e6" opacity="0"/></svg>
<svg class="r" style="left:815px;top:1041px" width="29" height="28" viewBox="0 0 29 28"><path d="M6 2L27 5L23 26L1 22Z" fill="#8fd0e0"/><path d="M6 2L27 5L23 26L1 22Z" fill="url(#npg)"/><defs><linearGradient id="npg" x1="0" y1="0" x2="1" y2="1"><stop offset="0" stop-color="#c6eef6"/><stop offset="1" stop-color="#5fa9c7"/></linearGradient></defs><path d="M27 5L28 24L23 26Z" fill="#c9b27a"/><path d="M8 1.5L26 4" stroke="#6a7f88" stroke-width="1.5" stroke-dasharray="1 1"/></svg>
<div class="r" style="left:805px;top:1077px;width:51px;height:3px;background:#0f7b2e;"></div>
<svg class="r" style="left:880px;top:1040px" width="23" height="29" viewBox="0 0 23 29"><defs><linearGradient id="of1" x1="0" y1="0" x2="1" y2="0"><stop offset="0" stop-color="#d3243a"/><stop offset="1" stop-color="#f07a1a"/></linearGradient></defs>
<path d="M10 0L22 4V25L10 29L0 25V5Z" fill="url(#of1)"/><path d="M5 7.5L12.5 5V24L5 22Z" fill="#eee1e1"/><path d="M12.5 5L16 5.5V23.5L12.5 24Z" fill="#c93a20" opacity="0.5"/></svg>
<svg class="r" style="left:939px;top:1040px" width="29" height="29" viewBox="0 0 29 29"><defs><linearGradient id="opg" x1="0" y1="0" x2="0" y2="1"><stop offset="0" stop-color="#ff2a3a"/><stop offset="1" stop-color="#b4101e"/></linearGradient></defs><path d="M14.5 0.5A14 14 0 1 0 14.5 28.5A14 14 0 1 0 14.5 0.5Z M14.5 5A4.7 9.5 0 1 1 14.5 24A4.7 9.5 0 1 1 14.5 5Z" fill="url(#opg)" fill-rule="evenodd"/></svg>
<svg class="r" style="left:1001px;top:1040px" width="29" height="29" viewBox="0 0 29 29"><path d="M5 1L28 5L27 22L5 19Z" fill="#d8dde6"/><path d="M7 3L26 6.5L25 20L7 17.5Z" fill="#1f4fc8"/><rect x="0.5" y="6.5" width="22" height="7.5" rx="1" fill="#e8f1fb" stroke="#5aa0e0" stroke-width="1"/><path d="M2.5 8.8H21M2.5 11.5H21" stroke="#5a9be0" stroke-width="1.2" stroke-dasharray="1.3 0.9"/><ellipse cx="15" cy="26" rx="6" ry="2.8" fill="#c8c8c8"/><path d="M13 19H17V24H13Z" fill="#b0b0b0"/></svg>
<svg class="r" style="left:1062px;top:1040px" width="33" height="32" viewBox="0 0 33 32"><circle cx="16.5" cy="5.5" r="4.3" fill="#7b83eb"/><circle cx="25" cy="7" r="3" fill="#5059c9"/><path d="M20 11H30V20C30 23 28 25 25 25H20Z" fill="#5059c9"/><path d="M8 11H23V22C23 26 20 29 16 29C12 29 9 26 8.5 22Z" fill="#7b83eb"/><rect x="0.5" y="8" width="15" height="15" rx="1.5" fill="#4b53bc"/><path d="M4 11.5H12M8 11.5V19.5" stroke="#fff" stroke-width="2"/><circle cx="24.5" cy="24" r="6.5" fill="#fff"/><circle cx="24.5" cy="24" r="5.3" fill="#5cb82e"/><path d="M21.5 24L23.7 26.2L27.7 22" stroke="#fff" stroke-width="1.6" fill="none"/></svg>
<div class="r" style="left:1053px;top:1077px;width:51px;height:3px;background:#0f7b2e;"></div>
<div class="r" style="left:1110px;top:1030px;width:56px;height:50px;background:rgba(255,255,255,0.45);"></div>
<div class="r" style="left:1166px;top:1030px;width:1px;height:50px;background:rgba(120,120,120,0.25);"></div>
<svg class="r" style="left:1125px;top:1040px" width="30" height="30" viewBox="0 0 30 30"><circle cx="14" cy="14" r="13.5" fill="#db4437"/><path d="M14 14L2.3 20.75A13.5 13.5 0 0 0 14 27.5Z" fill="#0f9d58"/><path d="M14 14L2.3 7.25A13.5 13.5 0 0 0 2.3 20.75L14 27.5A13.5 13.5 0 0 0 25.7 20.75Z" fill="#0f9d58"/><path d="M14 14H27.5A13.5 13.5 0 0 0 25.7 7.25Z" fill="#f4b400"/><path d="M14 14L25.7 7.25A13.5 13.5 0 0 1 25.7 20.75Z" fill="#f4b400"/><circle cx="14" cy="14" r="6" fill="#fff"/><circle cx="14" cy="14" r="4.7" fill="#4285f4"/><circle cx="22" cy="22" r="9.8" fill="#8d6e63"/><path d="M20 28V19.5H22.5A2.5 2.5 0 0 1 22.5 24.5H20" stroke="#fff" stroke-width="1.5" fill="none" opacity="0.85"/></svg>
<div class="r" style="left:1110px;top:1077px;width:56px;height:3px;background:#0f7b2e;"></div>
<svg class="r" style="left:1187px;top:1041px" width="29" height="27" viewBox="0 0 29 27"><rect x="7" y="0" width="22" height="27" rx="1" fill="#1d6f42"/><rect x="7" y="0" width="22" height="7" fill="#21a366"/><rect x="18" y="0" width="11" height="7" fill="#33c481"/><rect x="7" y="7" width="22" height="7" fill="#1b8c54"/><rect x="18" y="7" width="11" height="7" fill="#21a366"/><rect x="7" y="14" width="22" height="6.5" fill="#107c41"/><rect x="7" y="20.5" width="22" height="6.5" fill="#185c37"/><rect x="0" y="6" width="15" height="15" rx="1" fill="#107c41"/><path d="M4.2 9.5L10.8 17.5M10.8 9.5L4.2 17.5" stroke="#fff" stroke-width="2.2"/></svg>
<div class="r" style="left:1177px;top:1077px;width:51px;height:3px;background:#0f7b2e;"></div>
<svg class="r" style="left:1371px;top:1043px" width="28" height="26" viewBox="0 0 28 26"><circle cx="19" cy="7" r="6" fill="#f5a623"/><path d="M14 3A6 6 0 0 1 25 7" fill="#f9c74f"/><ellipse cx="10" cy="14" rx="10" ry="6.5" fill="#d5e3f5"/><ellipse cx="18" cy="14" rx="7" ry="5" fill="#c4d6ef"/><path d="M8 15C10 18 11 21 9 23A3 3 0 0 1 5 20C5 18 7 17 8 15Z" fill="#1d9bf0"/><path d="M18 15C20 18 21 21 19 23A3 3 0 0 1 15 20C15 18 17 17 18 15Z" fill="#1d9bf0"/></svg>
<div class="t" style="top:1047.56px;font-size:18px;color:#000;font-weight:400;left:1409px;transform:scaleX(0.93);transform-origin:left;">30°C</div>
<div class="t" style="top:1047.56px;font-size:18px;color:#000;font-weight:400;left:1458px;transform:scaleX(0.93);transform-origin:left;">Rain showers</div>
<svg class="r" style="left:1581px;top:1049px" width="18" height="11" viewBox="0 0 18 11"><path d="M1 10L9 2L17 10" stroke="#000" stroke-width="1.3" fill="none"/></svg>
<svg class="r" style="left:1612px;top:1047px" width="18" height="17" viewBox="0 0 18 17"><path d="M1.5 14A13 13 0 0 1 14.5 1.5M4.5 14A10 10 0 0 1 14.5 4.5M7.5 14A7 7 0 0 1 14.5 7.5M10.5 14A4 4 0 0 1 14.5 10.5" stroke="#000" stroke-width="1.1" fill="none"/><circle cx="15" cy="14.5" r="1.3" fill="#000"/></svg>
<svg class="r" style="left:1643px;top:1045px" width="16" height="20" viewBox="0 0 16 20"><rect x="1" y="5" width="9" height="10" rx="1.5" stroke="#000" stroke-width="1.2" fill="none"/><path d="M10 8.5L14.5 6V14L10 11.5" stroke="#000" stroke-width="1.2" fill="none"/><path d="M2 3A9 9 0 0 1 12 3M2 17A9 9 0 0 0 12 17" stroke="#000" stroke-width="1" fill="none"/></svg>
<svg class="r" style="left:1669px;top:1044px" width="24" height="22" viewBox="0 0 24 22"><path d="M1 3L20 1V18L1 19Z" stroke="#000" stroke-width="1.2" fill="none"/><path d="M7 12A4 4 0 0 1 13 8M13 8V10.5M13 8H10.5" stroke="#000" stroke-width="1" fill="none"/><circle cx="16.3" cy="16.3" r="4.5" fill="#2f7bd6"/></svg>
<svg class="r" style="left:1700px;top:1048px" width="19" height="14" viewBox="0 0 19 14"><path d="M1 4.5H4L8.5 1V13L4 9.5H1Z" stroke="#000" stroke-width="1.1" fill="none"/><path d="M12 4L18 10M18 4L12 10" stroke="#000" stroke-width="1.1"/></svg>
<div class="t" style="top:1037.51px;font-size:14.4px;color:#000;font-weight:400;left:1247.5px;width:1000px;text-align:center;transform:scaleX(0.95);transform-origin:center;">ENG</div>
<div class="t" style="top:1059.11px;font-size:14.4px;color:#000;font-weight:400;left:1247.5px;width:1000px;text-align:center;transform:scaleX(0.95);transform-origin:center;">IN</div>
<div class="t" style="top:1037.51px;font-size:14.4px;color:#000;font-weight:400;left:1312px;width:1000px;text-align:center;transform:scaleX(0.95);transform-origin:center;">3:45 PM</div>
<div class="t" style="top:1059.11px;font-size:14.4px;color:#000;font-weight:400;left:1312px;width:1000px;text-align:center;transform:scaleX(1.05);transform-origin:center;">8/1/2022</div>
<svg class="r" style="left:1868px;top:1044px" width="22" height="22" viewBox="0 0 22 22"><path d="M1.5 1.5H20.5V17.5H13L11 19.5L9 17.5H1.5Z" stroke="#000" stroke-width="1.1" fill="none"/></svg>
<div class="r" style="left:1914px;top:1030px;width:1px;height:50px;background:#b9b0b0;"></div>
</body></html>
